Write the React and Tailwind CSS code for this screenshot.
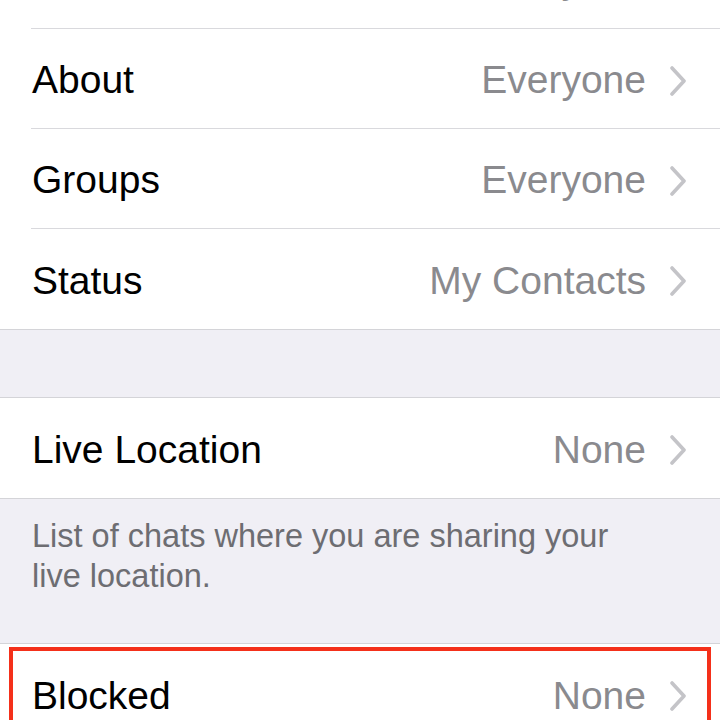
import React from "react";

function Chevron() {
  return (
    <svg width="18" height="30" viewBox="0 0 18 30" className="shrink-0 ml-[23px]">
      <path d="M3 2 L15 15 L3 28" fill="none" stroke="#c4c4c8" strokeWidth="3.6" strokeLinecap="round" strokeLinejoin="round" />
    </svg>
  );
}

function Row({ label, value, last }) {
  return (
    <div className="h-[100px] pl-[31px] bg-white">
      <div className={"h-full flex items-center pt-[4px] pr-[33px] " + (last ? "" : "border-b border-[#d9d9dd]")}>
        <span className="flex-1 pl-[1px] text-[39px] text-black">{label}</span>
        <span className="text-[39px] text-[#8a8a8e]">{value}</span>
        <Chevron />
      </div>
    </div>
  );
}

export default function App() {
  return (
    <div
      className="w-[720px] h-[720px] overflow-hidden bg-[#f0eff5]"
      style={{ fontFamily: '"Liberation Sans", Arial, sans-serif' }}
    >
      <div className="-mt-[71px] border-b border-[#d4d4d8] bg-white">
        <Row label="Last Seen" value="Everyone" />
        <Row label="About" value="Everyone" />
        <Row label="Groups" value="Everyone" />
        <Row label="Status" value="My Contacts" last />
      </div>
      <div className="h-[67px]" />
      <div className="border-t border-b border-[#d4d4d8] bg-white">
        <Row label="Live Location" value="None" last />
      </div>
      <div className="pl-[32px] pr-[80px] pt-[17px] pb-[47px] text-[32.5px] leading-[40px] text-[#6d6d72]">
        List of chats where you are sharing your live location.
      </div>
      <div className="relative border-t border-[#d4d4d8] bg-white">
        <Row label="Blocked" value="None" last />
        <div className="absolute left-[9px] right-[9px] top-[3px] h-[120px] border-[4px] border-[#f4301a]" />
      </div>
    </div>
  );
}
